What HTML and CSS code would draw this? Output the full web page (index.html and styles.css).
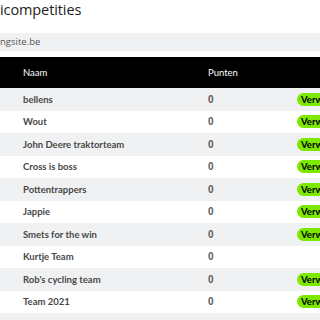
FILE: index.html
```html
<!DOCTYPE html>
<html>
<head>
<meta charset="utf-8">
<link rel="stylesheet" href="styles.css">
</head>
<body>
<div class="page">
  <h1 class="title">icompetities</h1>
  <div class="info">ngsite.be</div>
  <div class="table">
    <div class="row head"><span>Naam</span><span>Punten</span><span></span></div>
    <div class="row"><span>bellens</span><span>0</span><span><button class="btn">Verwijderen</button></span></div>
    <div class="row"><span>Wout</span><span>0</span><span><button class="btn">Verwijderen</button></span></div>
    <div class="row"><span>John Deere traktorteam</span><span>0</span><span><button class="btn">Verwijderen</button></span></div>
    <div class="row"><span>Cross is boss</span><span>0</span><span><button class="btn">Verwijderen</button></span></div>
    <div class="row"><span>Pottentrappers</span><span>0</span><span><button class="btn">Verwijderen</button></span></div>
    <div class="row"><span>Jappie</span><span>0</span><span><button class="btn">Verwijderen</button></span></div>
    <div class="row"><span>Smets for the win</span><span>0</span><span><button class="btn">Verwijderen</button></span></div>
    <div class="row"><span>Kurtje Team</span><span>0</span><span></span></div>
    <div class="row"><span>Rob's cycling team</span><span>0</span><span><button class="btn">Verwijderen</button></span></div>
    <div class="row"><span>Team 2021</span><span>0</span><span><button class="btn">Verwijderen</button></span></div>
    <div class="row"><span></span><span></span><span></span></div>
  </div>
</div>
</body>
</html>
```
FILE: styles.css
```css
html, body {
  margin: 0;
  padding: 0;
  background: #fff;
  overflow: hidden;
}
.page {
  width: 320px;
  height: 320px;
  overflow: hidden;
}
.title {
  margin: 0;
  height: 33px;
  font-family: "Open Sans", sans-serif;
  font-weight: 400;
  font-size: 14.5px;
  line-height: 20px;
  color: #222;
  letter-spacing: -0.1px;
}
.info {
  height: 18px;
  background: #f0f1f2;
  font-family: "Open Sans", sans-serif;
  font-size: 9.5px;
  line-height: 18px;
  color: #555;
}
.table {
  margin-top: 6px;
  width: 400px;
}
.row {
  display: grid;
  grid-template-columns: 185px 89px 1fr;
  padding-left: 23px;
  height: 22.5px;
  align-items: center;
  font-family: "Lato", sans-serif;
  font-weight: 700;
  font-size: 9.5px;
  color: #484848;
}
.row:nth-child(even) {
  background: #f0f1f2;
}
.row:nth-child(odd) {
  background: #fff;
}
.row span:nth-child(2) {
  font-family: "Liberation Sans", sans-serif;
  font-weight: 700;
  font-size: 10px;
  color: #5a5a5a;
}
.row.head {
  height: 31px;
  background: #000;
  color: #fff;
  font-weight: 400;
}
.row.head span:nth-child(2) {
  font-family: "Lato", sans-serif;
  font-weight: 400;
  color: #fff;
  font-size: 9.5px;
}
.btn {
  display: block;
  height: 13px;
  padding: 0 4px;
  border: 0;
  border-radius: 7px;
  background: #7de800;
  color: #000;
  font-family: "Lato", sans-serif;
  font-weight: 700;
  font-size: 9.5px;
  line-height: 13px;
  white-space: nowrap;
}
```
